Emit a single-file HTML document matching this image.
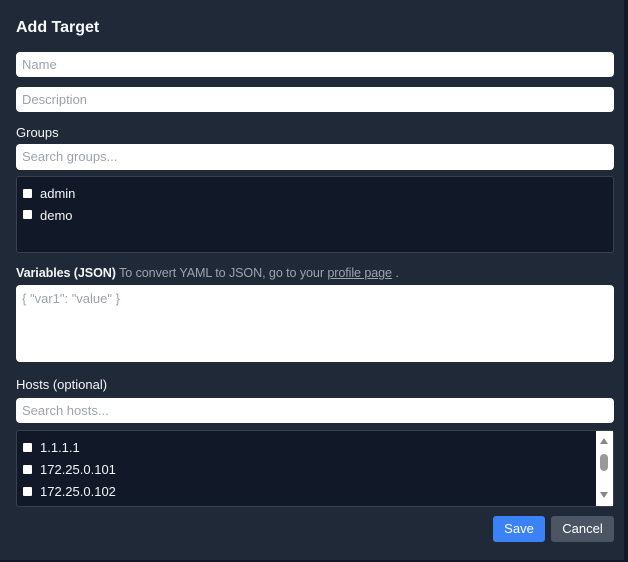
<!DOCTYPE html>
<html><head><style>
*{margin:0;padding:0;box-sizing:border-box}
body{width:628px;height:562px;background:#1f2937;font-family:"Liberation Sans",sans-serif;position:relative;overflow:hidden;color:#e5e7eb;font-size:13px}
.a{position:absolute}
.in{position:absolute;left:16px;width:598px;background:#fff;border-radius:4px;color:#9ca3af;font-size:13px;padding-left:6px}
.list{position:absolute;left:16px;width:598px;background:#111827;border:1px solid #374151;border-radius:3px}
.cb{position:absolute;left:6px;width:9px;height:9px;background:#fff;border-radius:1px}
.it{position:absolute;left:23px;color:#f3f4f6;font-size:13px}
.lbl{position:absolute;left:16px;font-size:13px;color:#f3f4f6}
</style></head><body>
<div class="a" style="right:0;top:0;width:4px;height:562px;background:#111827"></div>
<div class="a" style="left:0;bottom:0;width:628px;height:2px;background:#111827"></div>
<div class="a" style="left:16px;top:19px;font-size:16px;font-weight:bold;color:#f9fafb">Add Target</div>
<div class="in" style="top:52px;height:25px;line-height:25px">Name</div>
<div class="in" style="top:87px;height:25px;line-height:25px">Description</div>
<div class="lbl" style="top:125px">Groups</div>
<div class="in" style="top:144px;height:26px;line-height:26px">Search groups...</div>
<div class="list" style="top:176px;height:77px">
<div class="cb" style="top:12px"></div><div class="it" style="top:9px">admin</div>
<div class="cb" style="top:33px"></div><div class="it" style="top:31px">demo</div>
</div>
<div class="lbl" style="top:266px;font-size:12.6px;letter-spacing:-0.1px"><span style="font-weight:bold">Variables (JSON)</span> <span style="color:#9ca3af">To convert YAML to JSON, go to your <u>profile page</u> .</span></div>
<div class="in" style="top:285px;height:77px;padding-top:6px;color:#9ca3af">{ "var1": "value" }</div>
<div class="lbl" style="top:377px">Hosts (optional)</div>
<div class="in" style="top:398px;height:25px;line-height:25px">Search hosts...</div>
<div class="list" style="top:430px;height:77px">
<div class="cb" style="top:12px"></div><div class="it" style="top:9px">1.1.1.1</div>
<div class="cb" style="top:34px"></div><div class="it" style="top:31px">172.25.0.101</div>
<div class="cb" style="top:56px"></div><div class="it" style="top:53px">172.25.0.102</div>
<div class="a" style="right:0;top:0;width:17px;height:75px;background:#fff">
<div class="a" style="left:4px;top:7px;width:0;height:0;border-left:4px solid transparent;border-right:4px solid transparent;border-bottom:6px solid #888"></div>
<div class="a" style="left:4px;top:23px;width:8px;height:17px;border-radius:4px;background:#999"></div>
<div class="a" style="left:4px;top:61px;width:0;height:0;border-left:4px solid transparent;border-right:4px solid transparent;border-top:6px solid #888"></div>
</div>
</div>
<div class="a" style="left:493px;top:516px;width:52px;height:26px;background:#3b82f6;border-radius:3px;color:#fff;text-align:center;line-height:26px">Save</div>
<div class="a" style="left:551px;top:516px;width:63px;height:26px;background:#4b5563;border-radius:3px;color:#fff;text-align:center;line-height:26px">Cancel</div>
</body></html>
